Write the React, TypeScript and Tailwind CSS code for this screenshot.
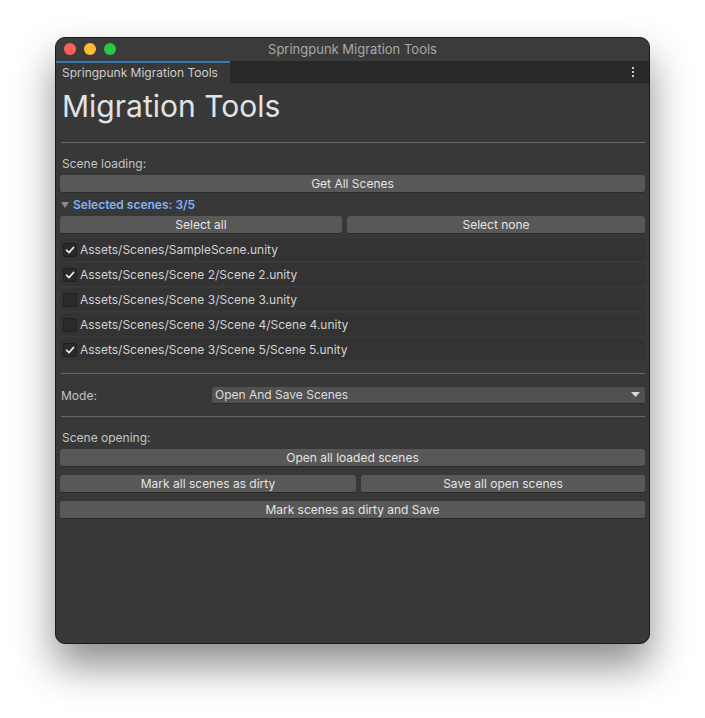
import React from "react";

const font = { fontFamily: "Inter, 'Noto Sans', 'Liberation Sans', sans-serif" };

function Btn({ label, className = "" }: { label: string; className?: string }) {
  return (
    <div
      className={`h-[18px] rounded-[3px] bg-[#585858] border-b border-[#2a2a2a] flex items-center justify-center text-[12px] text-[#e4e4e4] leading-none ${className}`}
    >
      {label}
    </div>
  );
}

function Check({ on }: { on: boolean }) {
  return (
    <div className="w-[14px] h-[14px] rounded-[2px] bg-[#2a2a2a] border border-[#202020] flex items-center justify-center">
      {on && (
        <svg width="10" height="10" viewBox="0 0 10 10">
          <path d="M1.5 5.2 L4 7.6 L8.6 2.4" stroke="#e8e8e8" strokeWidth="1.6" fill="none" strokeLinecap="round" strokeLinejoin="round" />
        </svg>
      )}
    </div>
  );
}

const scenes: [string, boolean][] = [
  ["Assets/Scenes/SampleScene.unity", true],
  ["Assets/Scenes/Scene 2/Scene 2.unity", true],
  ["Assets/Scenes/Scene 3/Scene 3.unity", false],
  ["Assets/Scenes/Scene 3/Scene 4/Scene 4.unity", false],
  ["Assets/Scenes/Scene 3/Scene 5/Scene 5.unity", true],
];

export default function App() {
  return (
    <div className="w-[705px] h-[718px] bg-white pt-[37px] pl-[55px]" style={font}>
      <div className="w-[595px] h-[607px] rounded-[10px] border border-[#1a1a1a] bg-[#383838] overflow-hidden shadow-[0_22px_40px_rgba(0,0,0,0.45)] flex flex-col">
        {/* title bar */}
        <div className="h-[23px] bg-[#3b3b3b] relative flex items-center justify-center">
          <div className="absolute left-[8px] top-[5px] flex gap-[8px]">
            <div className="w-[12px] h-[12px] rounded-full bg-[#fe5f57]" />
            <div className="w-[12px] h-[12px] rounded-full bg-[#febc2e]" />
            <div className="w-[12px] h-[12px] rounded-full bg-[#28c840]" />
          </div>
          <span className="text-[13px] text-[#a8a8a8] leading-none">Springpunk Migration Tools</span>
        </div>
        {/* tab bar */}
        <div className="h-[22px] bg-[#282828] flex items-stretch justify-between">
          <div className="w-[174px] bg-[#383838] border-t-2 border-[#3a78b5] flex items-center pl-[6px] text-[12px] text-[#cccccc] leading-none">
            Springpunk Migration Tools
          </div>
          <div className="flex flex-col items-center justify-center gap-[2px] pr-[15px]">
            <div className="w-[2px] h-[2px] bg-[#c8c8c8]" />
            <div className="w-[2px] h-[2px] bg-[#c8c8c8]" />
            <div className="w-[2px] h-[2px] bg-[#c8c8c8]" />
          </div>
        </div>
        {/* content */}
        <div className="flex flex-col pl-[4px] pr-[4px] text-[12px] text-[#c4c4c4]">
          <div className="h-[45px] flex items-center pl-[2px] text-[30px] text-[#e2e2e2] leading-none">Migration Tools</div>
          <div className="mt-[14px] ml-[1px] h-px bg-[#676767]" />
          <div className="mt-[14px] pl-[2px] h-[14px] flex items-center">Scene loading:</div>
          <Btn label="Get All Scenes" className="mt-[4px]" />
          <div className="mt-[3px] h-[17px] flex items-center gap-[4px] pl-[1px]">
            <svg width="8" height="8" viewBox="0 0 8 8">
              <path d="M0 1 L8 1 L4 7 Z" fill="#8a8a8a" />
            </svg>
            <span className="font-semibold text-[#7fb3f5]">Selected scenes: 3/5</span>
          </div>
          <div className="mt-[3px] flex gap-[5px]">
            <Btn label="Select all" className="w-[282px]" />
            <Btn label="Select none" className="flex-1" />
          </div>
          <div className="mt-[4px] flex flex-col gap-[1px]">
            {scenes.map(([p, on]) => (
              <div key={p} className="h-[24px] bg-[#333333] flex items-center pl-[3px] gap-[3px] border-b border-[#3a3a3a]">
                <Check on={on} />
                <span className="text-[#d2d2d2]">{p}</span>
              </div>
            ))}
          </div>
          <div className="mt-[11px] ml-[1px] h-px bg-[#676767]" />
          <div className="mt-[13px] flex items-center h-[17px]">
            <div className="w-[152px] pl-[1px]">Mode:</div>
            <div className="flex-1 h-[17px] rounded-[3px] bg-[#515151] border-b border-[#2a2a2a] flex items-center justify-between pl-[3px] pr-[5px] text-[#dcdcdc]">
              <span>Open And Save Scenes</span>
              <svg width="9" height="6" viewBox="0 0 9 6">
                <path d="M0 0 L9 0 L4.5 5 Z" fill="#d8d8d8" />
              </svg>
            </div>
          </div>
          <div className="mt-[12px] ml-[1px] h-px bg-[#676767]" />
          <div className="mt-[14px] pl-[2px] h-[14px] flex items-center">Scene opening:</div>
          <Btn label="Open all loaded scenes" className="mt-[4px]" />
          <div className="mt-[8px] flex gap-[5px]">
            <Btn label="Mark all scenes as dirty" className="w-[296px]" />
            <Btn label="Save all open scenes" className="flex-1" />
          </div>
          <Btn label="Mark scenes as dirty and Save" className="mt-[8px]" />
        </div>
      </div>
    </div>
  );
}
